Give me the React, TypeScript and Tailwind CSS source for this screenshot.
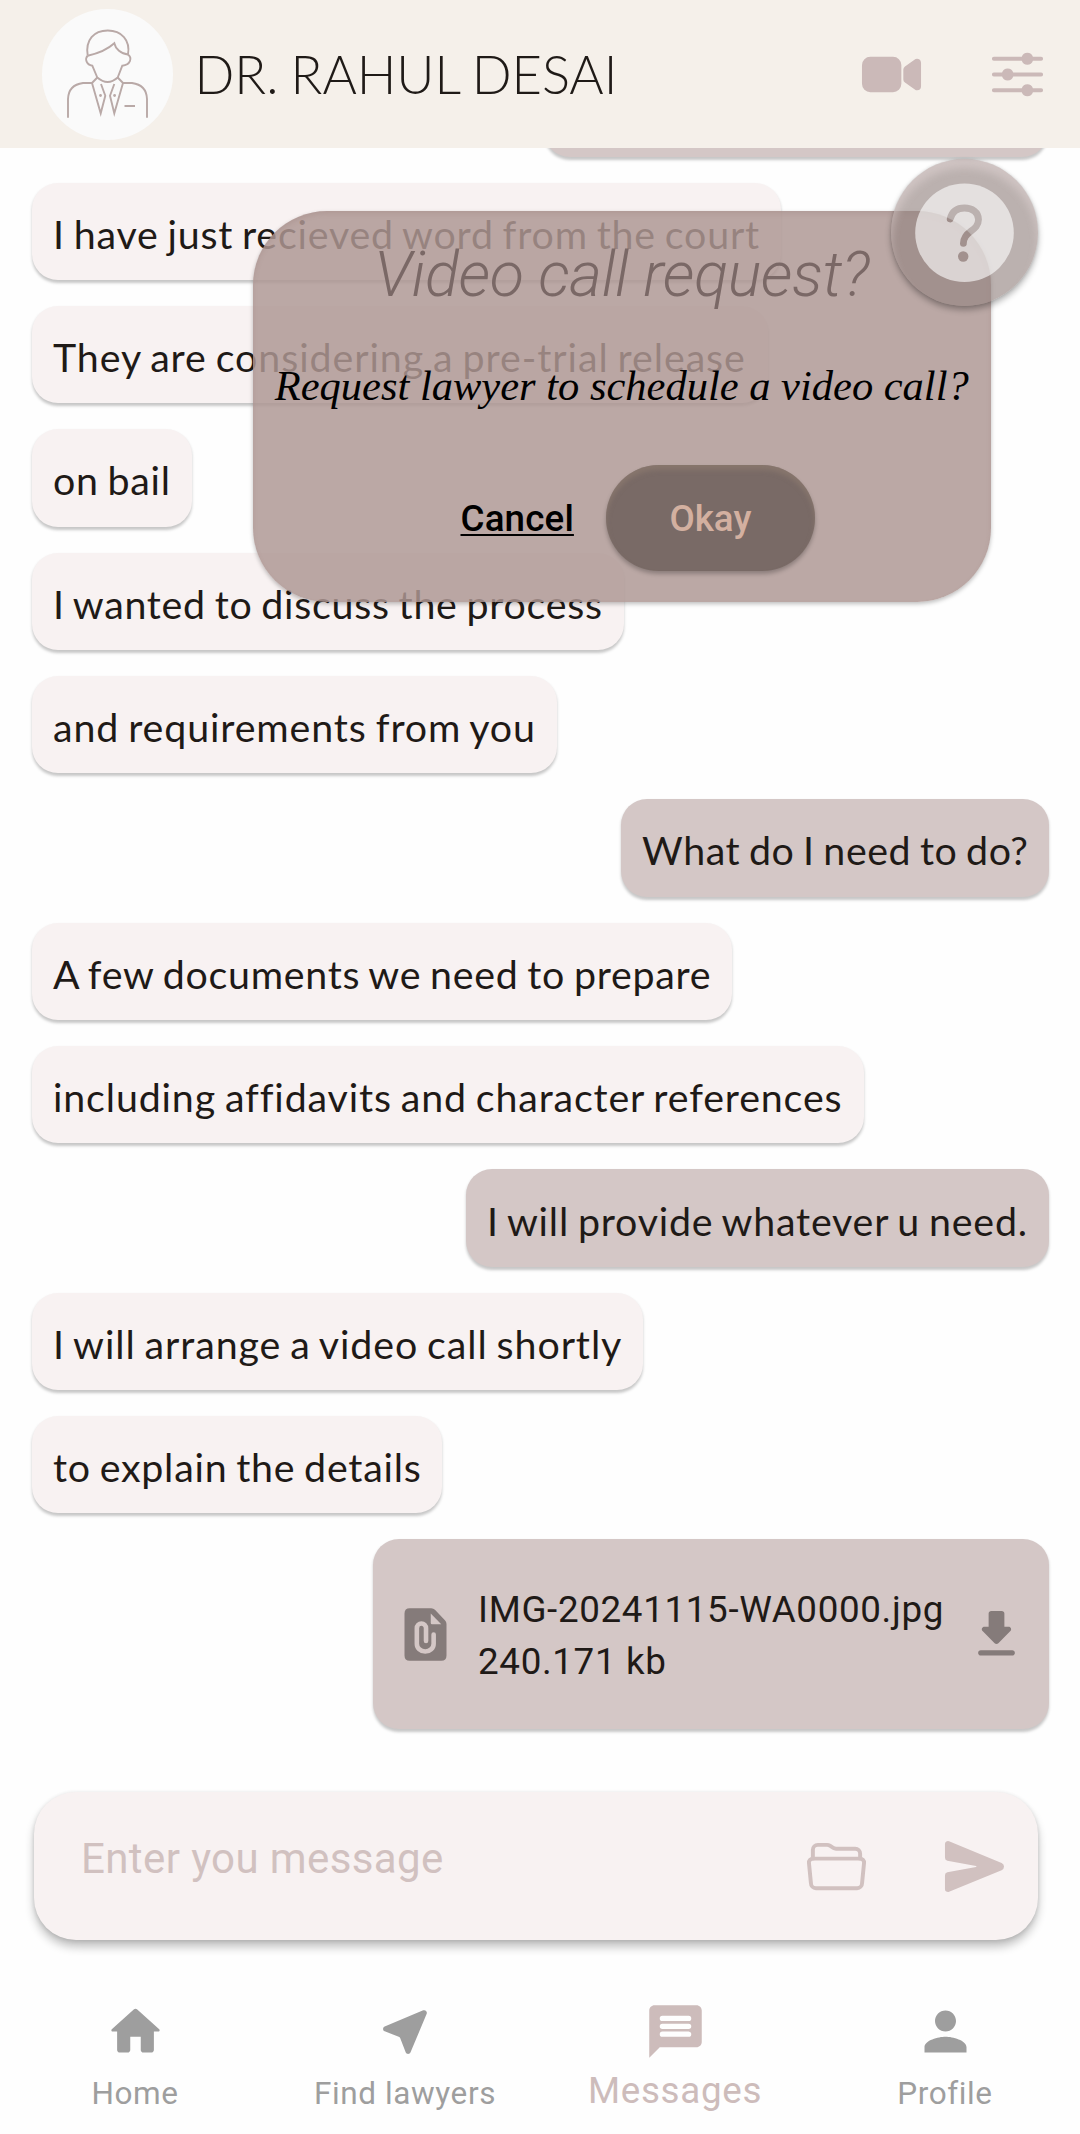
import React from "react";
import { IoSend, IoFolderOpenOutline, IoOptions, IoVideocam } from "react-icons/io5";

const messages: { text: string; size: string; mine?: boolean }[] = [
  { text: "I have just recieved word from the court", size: "w-[749.500px] tracking-[0.800px]" },
  { text: "They are considering a pre-trial release", size: "w-[736px] tracking-[0.920px]" },
  { text: "on bail", size: "w-[160px] tracking-[0.730px]" },
  { text: "I wanted to discuss the process", size: "w-[592px] tracking-[0.730px]" },
  { text: "and requirements from you", size: "w-[525.500px] tracking-[0.880px]" },
  { text: "What do I need to do?", size: "w-[428px] tracking-[0.580px]", mine: true },
  { text: "A few documents we need to prepare", size: "w-[700.500px] tracking-[0.730px]" },
  { text: "including affidavits and character references", size: "w-[832px] tracking-[0.850px]" },
  { text: "I will provide whatever u need.", size: "w-[583px] tracking-[0.800px]", mine: true },
  { text: "I will arrange a video call shortly", size: "w-[611.500px] tracking-[0.900px]" },
  { text: "to explain the details", size: "w-[410.500px] tracking-[0.750px]" },
];

const Icon = ({ d, className }: { d: string; className: string }) => (
  <svg viewBox="0 0 24 24" className={className} fill="currentColor">
    <path fillRule="evenodd" d={d} />
  </svg>
);

const homePath =
  "M10 19v-5h4v5c0 .55.45 1 1 1h3c.55 0 1-.45 1-1v-7h1.7c.46 0 .68-.57.33-.87L12.67 3.6c-.38-.34-.96-.34-1.34 0l-8.36 7.53c-.34.3-.13.87.33.87H5v7c0 .55.45 1 1 1h3c.55 0 1-.45 1-1z";
const nearPath =
  "M18.75 3.94L4.07 10.08c-.83.35-.81 1.53.02 1.85L9.43 14c.26.1.47.31.57.57l2.06 5.33c.32.84 1.51.86 1.86.03l6.15-14.67c.33-.83-.5-1.66-1.32-1.32z";
const messagePath =
  "M20 2H4c-1.1 0-2 .9-2 2v18l4-4h14c1.1 0 2-.9 2-2V4c0-1.1-.9-2-2-2zM7 6h10a1 1 0 0 1 0 2H7a1 1 0 0 1 0-2zm0 3h10a1 1 0 0 1 0 2H7a1 1 0 0 1 0-2zm0 3h10a1 1 0 0 1 0 2H7a1 1 0 0 1 0-2z";
const personPath =
  "M12 12c2.210 0 4-1.790 4-4s-1.790-4-4-4-4 1.790-4 4 1.790 4 4 4zm0 2c-2.670 0-8 1.340-8 4v2h16v-2c0-2.660-5.330-4-8-4z";
const downloadPath =
  "M16.59 9H15V4c0-.55-.45-1-1-1h-4c-.55 0-1 .45-1 1v5H7.41c-.89 0-1.34 1.08-.71 1.71l4.59 4.59c.39.39 1.02.39 1.41 0l4.59-4.59c.63-.63.19-1.71-.7-1.71zM5 19c0 .55.45 1 1 1h12c.55 0 1-.45 1-1s-.45-1-1-1H6c-.55 0-1 .45-1 1z";

const nav = [
  { label: "Home", d: homePath },
  { label: "Find lawyers", d: nearPath },
  { label: "Messages", d: messagePath, active: true },
  { label: "Profile", d: personPath },
];

const Avatar = () => (
  <div className="ml-[42px] h-[131px] w-[131px] shrink-0 rounded-full bg-[#fafafa]">
    <svg viewBox="0 0 131 131" className="h-full w-full" fill="none" stroke="#b9a9a7" strokeWidth="1.9">
      <path d="M45.700 46.700C43 31 52 21.500 65.700 21.500S88.500 31 86 45.500" />
      <path d="M45.700 46.700C56 44.500 65 41 72.300 34.300C73.500 40 79 45 86 45.500" />
      <path d="M45.700 46.700C42.500 50 44.500 56 50.300 56.700L55.300 68.500Q65.700 77.500 75.700 68.500L80.300 56.700C88.500 56 90.500 49 86 45.500" />
      <path d="M26 108.700V90Q26.500 76 41 74H50L55.300 68.500M105 108.700V90Q104.500 76 90 74H81L75.700 68.500" />
      <path d="M50 74L58.700 104.300L63.300 86.700L59 75M81 74L72.300 104.300L68 86.700L72.300 75M82.500 97H93" />
      <g fill="#b9a9a7" stroke="none">
        <circle cx="58.500" cy="86.500" r="1.400" />
        <circle cx="72.600" cy="86.500" r="1.400" />
      </g>
    </svg>
  </div>
);

const AttachmentIcon = () => (
  <svg viewBox="0 0 24 24" className="h-[63px] w-[63px]" fill="none">
    <path
      fill="#857b7a"
      d="M6 2h8.200q.8 0 1.400.6l3.800 4q.6.6.6 1.400V20q0 2-2 2H6q-2 0-2-2V4q0-2 2-2z"
    />
    <path fill="#d4c7c6" d="M14 4v3.600q0 .5.5.5H18z" />
    <path
      stroke="#d4c7c6"
      strokeWidth="1.750"
      strokeLinecap="round"
      d="M15.100 12v3.500a3.200 3 0 0 1-6.400 0V9.600a1.750 1.800 0 0 1 3.500 0V14.500"
    />
  </svg>
);

const HelpBubble = () => (
  <div className="absolute top-[158.500px] left-[891.300px] z-30 h-[147px] w-[147px] rounded-full bg-[#938380]/63 shadow-[0_4px_6px_rgba(0,0,0,0.3),0_0_3px_rgba(0,0,0,0.12),inset_0_9px_9px_rgba(232,220,220,0.45)]">
    <svg viewBox="0 0 147 147" className="h-full w-full">
      <mask id="question">
        <circle cx="73.500" cy="73.800" r="49.300" fill="#fff" />
        <path
          d="M59.200 60C61 52.500 66 49 73.500 49C81 49 87.500 53 87.500 60.500C87.500 70 78 71.500 74.500 77.500Q72.300 81 72.400 84.300"
          fill="none"
          stroke="#000"
          strokeWidth="6.800"
          strokeLinecap="round"
        />
        <circle cx="72.200" cy="97.500" r="5.200" fill="#000" />
      </mask>
      <rect width="147" height="147" fill="#fff" fillOpacity="0.6" mask="url(#question)" />
    </svg>
  </div>
);

export default function App() {
  return (
    <div className="relative flex h-[2134px] w-[1080px] flex-col overflow-hidden bg-[#fefefe] font-[Lato,sans-serif]">
      <header className="z-10 flex h-[148px] shrink-0 items-center bg-[#f5f0ea]">
        <Avatar />
        <h1 className="ml-[21.500px] flex-1 text-[52.500px] leading-[64px] font-light tracking-[-0.050px] [word-spacing:-2px] text-[#1f1a17]">
          DR. RAHUL DESAI
        </h1>
        <IoVideocam className="mr-[63px] h-[63px] w-[63px] text-[#cbb9b8]" />
        <IoOptions className="mr-[31px] h-[63px] w-[63px] text-[#cbb9b8]" />
      </header>

      <main className="flex h-[1619px] shrink-0 flex-col items-start gap-[26px] px-[31.500px] text-[39.375px] leading-[47px] text-[#1f1a17]">
        <div className="-mt-[89px] mr-[1px] h-[97.500px] w-[504px] shrink-0 self-end rounded-[26px] bg-[#d4c7c6] shadow-[0_2.500px_3px_rgba(0,0,0,0.22)]" />
        {messages.map((m) => (
          <div
            key={m.text}
            className={
              "flex h-[97.370px] shrink-0 items-center whitespace-nowrap rounded-[26px] pl-[21.500px] pt-[4px] [word-spacing:-2px] shadow-[0_2.500px_3px_rgba(0,0,0,0.22)] " +
              m.size +
              (m.mine ? " self-end bg-[#d4c7c6]" : " bg-[#f8f2f2]")
            }
          >
            {m.text}
          </div>
        ))}
        <div className="flex h-[190px] w-[676px] shrink-0 items-center self-end rounded-[26px] bg-[#d4c7c6] pl-[21px] pr-[21px] font-[Roboto,sans-serif] text-[36.750px] leading-[52px] tracking-[0.660px] shadow-[0_2.500px_3px_rgba(0,0,0,0.22)]">
          <AttachmentIcon />
          <div className="ml-[21.500px] flex-1 whitespace-nowrap pt-[3px]">
            <div>IMG-20241115-WA0000.jpg</div>
            <div>240.171 kb</div>
          </div>
          <Icon className="h-[63px] w-[63px] text-[#857b7a]" d={downloadPath} />
        </div>
      </main>

      <div className="mt-[25px] ml-[33.500px] flex h-[148px] w-[1004.500px] shrink-0 items-center rounded-[42px] bg-[#f8f2f2] pl-[47.500px] pr-[32.500px] font-[Roboto,sans-serif] shadow-[0_7px_10px_rgba(0,0,0,0.24),0_1px_4px_rgba(0,0,0,0.12)]">
        <div className="flex-1 pb-[15px] text-[42px] leading-[50px] tracking-[0.400px] text-[#d1c1c0]">Enter you message</div>
        <IoFolderOpenOutline className="mr-[75px] h-[63px] w-[63px] text-[#d1c1c0]" />
        <IoSend className="h-[63px] w-[63px] text-[#d1c1c0]" />
      </div>

      <nav className="mt-[60px] grid shrink-0 grid-cols-4 font-[Roboto,sans-serif]">
        {nav.map((n) => (
          <div key={n.label} className={"flex flex-col items-center " + (n.active ? "text-[#cdbcbb]" : "text-[#9e9e9e]")}>
            <Icon d={n.d} className="h-[63px] w-[63px]" />
            <div
              className={
                "leading-[40px] " +
                (n.active ? "mt-[8px] text-[36.750px] tracking-[0.700px]" : "mt-[11px] text-[31.500px] tracking-[0.600px]")
              }
            >
              {n.label}
            </div>
          </div>
        ))}
      </nav>

      <section className="absolute top-[211px] left-[253px] z-20 flex h-[391px] w-[737.500px] flex-col items-center rounded-[74px] bg-[#ae9794]/84 font-[Roboto,sans-serif] shadow-[0_2px_4px_rgba(0,0,0,0.25),inset_0_3px_4px_rgba(150,125,120,0.25)]">
        <h2 className="mt-[27px] text-[63px] leading-[74px] font-light tracking-[-0.400px] text-[#7a6866] italic">
          Video call request?
        </h2>
        <p className="mt-[49px] font-['Liberation_Serif',serif] text-[42.500px] leading-[50px] whitespace-nowrap text-black italic">
          Request lawyer to schedule a video call?
        </p>
        <div className="mt-[54px] flex items-center gap-[32px] self-start pl-[207.500px] text-[36.750px] font-medium">
          <button className="pt-[2px] tracking-[0.150px] text-black underline decoration-[2px] underline-offset-[3px] [text-decoration-skip-ink:none]">
            Cancel
          </button>
          <button className="h-[105.500px] w-[209px] rounded-full bg-[#796a66] pt-[2px] text-[#d3b0a0] shadow-[0_3px_4px_rgba(0,0,0,0.25),inset_0_5px_5px_rgba(150,130,115,0.5)]">
            Okay
          </button>
        </div>
      </section>

      <HelpBubble />
    </div>
  );
}
